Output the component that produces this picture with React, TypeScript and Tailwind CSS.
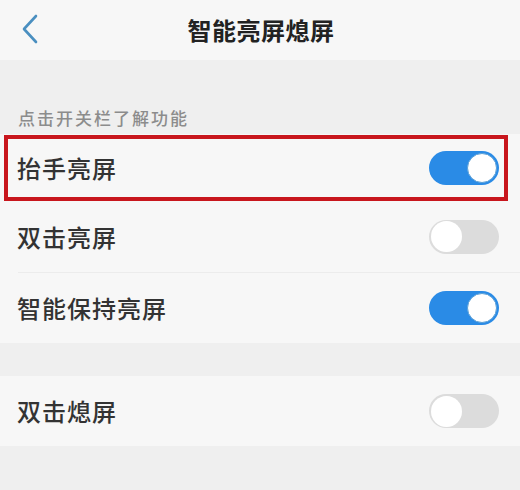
import React from "react";

const font = { fontFamily: '"Noto Sans CJK SC", "Noto Sans", sans-serif' };

function Toggle({ on }: { on: boolean }) {
  return on ? (
    <div className="w-[70px] h-[34px] rounded-full bg-[#2a8be6] flex items-center justify-end pr-[2px]">
      <div className="w-[30px] h-[30px] rounded-full bg-white border border-[#5a9fd6]" />
    </div>
  ) : (
    <div className="w-[70px] h-[34px] rounded-full bg-[#dcdcdc] flex items-center justify-start pl-[2px]">
      <div className="w-[31px] h-[31px] rounded-full bg-white" />
    </div>
  );
}

export default function App() {
  return (
    <div className="w-[520px] h-[490px] bg-[#efefef] flex flex-col overflow-hidden" style={font}>
      <div className="h-[60px] bg-[#f7f7f7] relative flex items-center justify-center">
        <svg className="absolute left-[20px] top-[13px]" width="20" height="32" viewBox="0 0 20 32">
          <path d="M16 3 L4 16 L16 29" fill="none" stroke="#4a8fc0" strokeWidth="2.6" strokeLinecap="round" strokeLinejoin="round" />
        </svg>
        <span className="text-[24px] font-bold text-[#222] tracking-[0.5px] pl-[2px]">智能亮屏熄屏</span>
      </div>
      <div className="h-[74px] flex items-end pl-[18px] pb-[4px]">
        <span className="text-[17px] font-medium text-[#8c8c8c] tracking-[2px]">点击开关栏了解功能</span>
      </div>
      <div className="bg-[#f7f7f7] pt-[1px]">
        <div className="ml-[4px] mr-[12px] h-[66px] border-[4px] border-[#c8161d] flex items-center justify-between pl-[9px] pr-[5px]">
          <span className="text-[24px] font-medium text-[#333] tracking-[1px]">抬手亮屏</span>
          <Toggle on />
        </div>
        <div className="h-[71px] flex items-center justify-between pl-[17px] pr-[21px]">
          <span className="text-[24px] font-medium text-[#333] tracking-[1px]">双击亮屏</span>
          <Toggle on={false} />
        </div>
        <div className="ml-[18px] h-px bg-[#ececec]" />
        <div className="h-[70px] flex items-center justify-between pl-[17px] pr-[21px]">
          <span className="text-[24px] font-medium text-[#333] tracking-[1px]">智能保持亮屏</span>
          <Toggle on />
        </div>
      </div>
      <div className="h-[33px]" />
      <div className="bg-[#f7f7f7] h-[70px] flex items-center justify-between pl-[17px] pr-[21px]">
        <span className="text-[24px] font-medium text-[#333] tracking-[1px]">双击熄屏</span>
        <Toggle on={false} />
      </div>
    </div>
  );
}
